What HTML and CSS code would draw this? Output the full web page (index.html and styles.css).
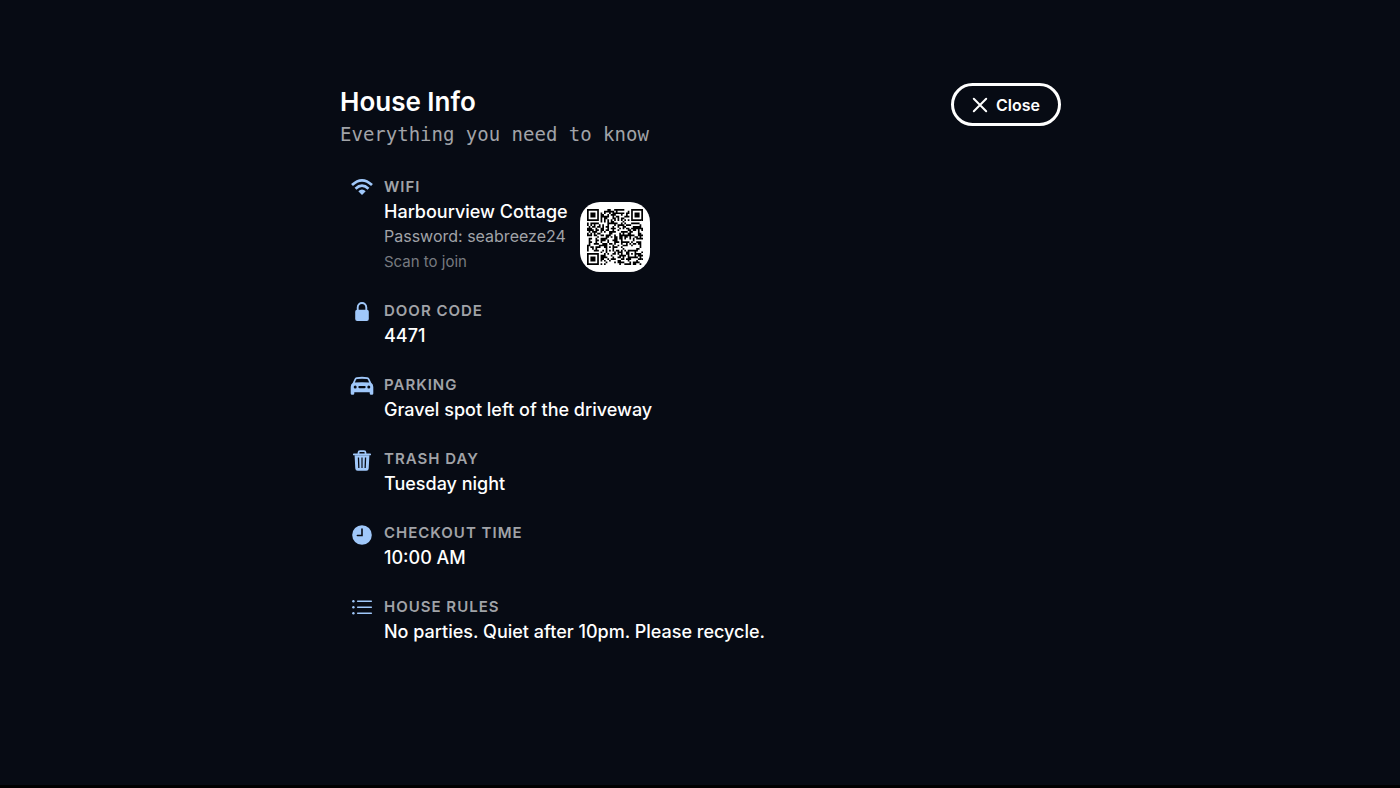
FILE: index.html
```html
<!DOCTYPE html>
<html lang="en">
<head>
<meta charset="utf-8">
<meta name="viewport" content="width=device-width, initial-scale=1">
<title>House Info</title>
<link rel="stylesheet" href="styles.css">
</head>
<body>
<main class="panel">
  <header class="panel-header">
    <div class="heading">
      <h1 class="title">House Info</h1>
      <p class="subtitle">Everything you need to know</p>
    </div>
    <button class="close" type="button">
      <svg class="close-icon" viewBox="0 0 16 16" aria-hidden="true"><path d="M1.8 1.8 14.2 14.2M14.2 1.8 1.8 14.2"/></svg>
      Close
    </button>
  </header>
  <div class="rows">
    <section class="row">
      <svg class="icon" viewBox="0 0 24 24" aria-hidden="true">
        <g fill="none" stroke="currentColor" stroke-width="2.7"><path d="M2 10.1Q12 .6 22 10.1"/><path d="M5.5 13.7Q12 7.6 18.5 13.7"/></g>
        <path d="M8.3 16.2Q12 12.8 15.7 16.2L12 20Z"/>
      </svg>
      <div class="text">
        <h2 class="label">WIFI</h2>
        <div class="wifi">
          <div>
            <p class="value">Harbourview Cottage</p>
            <p class="password">Password: seabreeze24</p>
            <p class="hint">Scan to join</p>
          </div>
          <div class="qr-card"><svg class="qr" role="img" aria-label="Wi-Fi QR code" viewBox="0 0 33 33"><path id="qr-modules" shape-rendering="geometricPrecision"/></svg></div>
        </div>
      </div>
    </section>
    <section class="row">
      <svg class="icon" viewBox="0 0 24 24" aria-hidden="true">
        <path d="M7.7 11V8.6C7.7 2.4 16.3 2.4 16.3 8.6V11" fill="none" stroke="currentColor" stroke-width="1.9"/>
        <rect x="5.2" y="10.7" width="13.6" height="11.3" rx="2"/>
      </svg>
      <div class="text">
        <h2 class="label">DOOR CODE</h2>
        <p class="value">4471</p>
      </div>
    </section>
    <section class="row">
      <svg class="icon" viewBox="0 0 24 24" aria-hidden="true">
        <path fill-rule="evenodd" d="M6.6 4.2Q12 3.2 17.4 4.2Q18.9 4.5 19.5 5.9L21.2 9.7Q23.3 11.3 23.3 14V20.5Q23.3 21.8 22 21.8H21Q19.7 21.8 19.7 20.5V19.3H4.3V20.5Q4.3 21.8 3 21.8H2Q.7 21.8 .7 20.5V14Q.7 11.3 2.8 9.7L4.5 5.9Q5.1 4.5 6.6 4.2ZM7 6Q6.3 6.1 6 6.8L4.8 9.6Q12 8.8 19.2 9.6L18 6.8Q17.7 6.1 17 6Q12 5.3 7 6ZM5.2 12.5A1.5 1.5 0 1 0 5.2 15.5A1.5 1.5 0 1 0 5.2 12.5ZM18.8 12.5A1.5 1.5 0 1 0 18.8 15.5A1.5 1.5 0 1 0 18.8 12.5ZM9.4 13A1.1 1.1 0 0 0 9.4 15.2H14.6A1.1 1.1 0 0 0 14.6 13Z"/>
      </svg>
      <div class="text">
        <h2 class="label">PARKING</h2>
        <p class="value">Gravel spot left of the driveway</p>
      </div>
    </section>
    <section class="row">
      <svg class="icon" viewBox="0 0 24 24" aria-hidden="true">
        <path d="M8.5 7V5.6Q8.5 4.1 10 4.1H14Q15.5 4.1 15.5 5.6V7M3.8 7.4H20.2" fill="none" stroke="currentColor" stroke-width="1.7" stroke-linecap="round"/>
        <path fill-rule="evenodd" d="M4.6 8.3H19.4L18.7 21.6Q18.6 23.8 16.4 23.8H7.6Q5.4 23.8 5.3 21.6ZM7.8 10.6 8.2 21.1H9.5L9.1 10.6ZM11.4 10.6V21.1H12.6V10.6ZM14.9 10.6 14.5 21.1H15.8L16.2 10.6Z"/>
      </svg>
      <div class="text">
        <h2 class="label">TRASH DAY</h2>
        <p class="value">Tuesday night</p>
      </div>
    </section>
    <section class="row">
      <svg class="icon" viewBox="0 0 24 24" aria-hidden="true">
        <circle cx="12" cy="14" r="9.8"/>
        <path class="clock-hands" d="M12 8V14.5H7.4"/>
      </svg>
      <div class="text">
        <h2 class="label">CHECKOUT TIME</h2>
        <p class="value">10:00 AM</p>
      </div>
    </section>
    <section class="row">
      <svg class="icon" viewBox="0 0 24 24" aria-hidden="true">
        <path d="M7.7 6.3H21.3M7.7 12.3H21.3M7.7 18.3H21.3" fill="none" stroke="currentColor" stroke-width="1.6" stroke-linecap="round"/>
        <circle cx="3.4" cy="6.3" r="1.2"/><circle cx="3.4" cy="12.3" r="1.2"/><circle cx="3.4" cy="18.3" r="1.2"/>
      </svg>
      <div class="text">
        <h2 class="label">HOUSE RULES</h2>
        <p class="value">No parties. Quiet after 10pm. Please recycle.</p>
      </div>
    </section>
  </div>
</main>
<script src="qr.js"></script>
</body>
</html>
```
FILE: styles.css
```css
* { box-sizing: border-box; }

body {
  margin: 0;
  min-height: 100vh;
  padding: 83px 24px 40px;
  background: #070b14;
  border-bottom: 3px solid #000;
  color: #fff;
  font-family: Inter, "Liberation Sans", sans-serif;
}

h1, h2, p { margin: 0; }

.panel {
  max-width: 722px;
  margin: 0 auto;
  padding-left: 1px;
}

.panel-header {
  display: flex;
  justify-content: space-between;
  align-items: flex-start;
  margin-bottom: 28px;
}

.title {
  font-size: 26px;
  line-height: 38px;
  font-weight: 600;
}

.subtitle {
  font-family: "DejaVu Sans Mono", "Liberation Mono", monospace;
  font-size: 19px;
  line-height: 26px;
  color: #a1a3a8;
}

.close {
  display: flex;
  align-items: center;
  gap: 8px;
  height: 43px;
  padding: 0 18px;
  border: 3px solid #fff;
  border-radius: 22px;
  background: transparent;
  color: #fff;
  font: 600 16px/24px Inter, "Liberation Sans", sans-serif;
}

.close-icon {
  width: 16px;
  height: 16px;
  fill: none;
  stroke: currentColor;
  stroke-width: 2;
  stroke-linecap: round;
}

.rows {
  display: flex;
  flex-direction: column;
  gap: 25px;
  padding-left: 10px;
}

.row {
  display: flex;
  gap: 10px;
}

.icon {
  flex: none;
  width: 24px;
  height: 24px;
  fill: currentColor;
  color: #a0c8fa;
}

.clock-hands {
  fill: none;
  stroke: #070b14;
  stroke-width: 1.6;
  stroke-linecap: round;
}

.wifi {
  display: flex;
  align-items: center;
  gap: 12px;
}

.label {
  font-size: 15px;
  line-height: 24px;
  font-weight: 600;
  letter-spacing: 1px;
  color: #a1a3a8;
}

.value {
  font-size: 18px;
  line-height: 25px;
  font-weight: 500;
}

.password {
  font-size: 16px;
  line-height: 25px;
  color: #a1a3a8;
}

.hint {
  font-size: 15px;
  line-height: 25px;
  color: #777a80;
}

.qr-card {
  width: 70px;
  height: 70px;
  padding: 7px;
  border-radius: 20px;
  background: #fff;
}

.qr {
  display: block;
  width: 56px;
  height: 56px;
}
```
FILE: qr.js
```js
// Builds a version 4, level M QR code for the Wi-Fi network.
(function () {
  const N = 33, DATA = 64, ECC = 18;
  const payload = "WIFI:T:WPA;S:Harbourview Cottage;P:seabreeze24;;";

  const exp = [], log = [];
  for (let i = 0, x = 1; i < 255; i++) {
    exp[i] = x; log[x] = i;
    x <<= 1; if (x & 256) x ^= 285;
  }
  const mul = (a, b) => a && b ? exp[(log[a] + log[b]) % 255] : 0;
  let gen = [1];
  for (let i = 0; i < ECC; i++) {
    const next = gen.concat(0);
    gen.forEach((c, j) => { next[j + 1] ^= mul(c, exp[i]); });
    gen = next;
  }
  function remainder(block) {
    const r = block.concat(Array(ECC).fill(0));
    for (let i = 0; i < block.length; i++) {
      const f = r[i];
      gen.forEach((c, j) => { r[i + j] ^= mul(c, f); });
    }
    return r.slice(block.length);
  }

  let bits = "0100" + payload.length.toString(2).padStart(8, "0");
  for (const ch of payload) bits += ch.charCodeAt(0).toString(2).padStart(8, "0");
  bits += "0000";
  while (bits.length % 8) bits += "0";
  const data = bits.match(/.{8}/g).map(b => parseInt(b, 2));
  for (let p = 0; data.length < DATA; p++) data.push(p % 2 ? 17 : 236);

  const blocks = [data.slice(0, 32), data.slice(32)];
  const ecc = blocks.map(remainder);
  const out = [];
  for (let i = 0; i < 32; i++) blocks.forEach(b => out.push(b[i]));
  for (let i = 0; i < ECC; i++) ecc.forEach(b => out.push(b[i]));
  const stream = out.map(b => b.toString(2).padStart(8, "0")).join("");

  const base = Array.from({ length: N }, () => Array(N).fill(0));
  const fixed = Array.from({ length: N }, () => Array(N).fill(false));
  const put = (g, r, c, v) => {
    if (r >= 0 && c >= 0 && r < N && c < N) { g[r][c] = v ? 1 : 0; fixed[r][c] = true; }
  };
  for (let i = 0; i < N; i++) { put(base, 6, i, i % 2 === 0); put(base, i, 6, i % 2 === 0); }
  for (const [r, c] of [[3, 3], [3, N - 4], [N - 4, 3]]) {
    for (let y = -4; y <= 4; y++) for (let x = -4; x <= 4; x++) {
      const d = Math.max(Math.abs(x), Math.abs(y));
      put(base, r + y, c + x, d !== 2 && d !== 4);
    }
  }
  for (let y = -2; y <= 2; y++) for (let x = -2; x <= 2; x++) {
    put(base, 26 + y, 26 + x, Math.max(Math.abs(x), Math.abs(y)) !== 1);
  }
  function format(g, mask) {
    let rem = mask;
    for (let i = 0; i < 10; i++) rem = (rem << 1) ^ ((rem >> 9) * 1335);
    const v = (mask << 10 | rem) ^ 21522, bit = i => v >> i & 1;
    for (let i = 0; i < 6; i++) put(g, i, 8, bit(i));
    put(g, 7, 8, bit(6)); put(g, 8, 8, bit(7)); put(g, 8, 7, bit(8));
    for (let i = 9; i < 15; i++) put(g, 8, 14 - i, bit(i));
    for (let i = 0; i < 8; i++) put(g, 8, N - 1 - i, bit(i));
    for (let i = 8; i < 15; i++) put(g, N - 15 + i, 8, bit(i));
    put(g, N - 8, 8, 1);
  }
  format(base, 0);

  let k = 0;
  for (let right = N - 1; right >= 1; right -= 2) {
    if (right === 6) right = 5;
    for (let v = 0; v < N; v++) for (let j = 0; j < 2; j++) {
      const c = right - j, r = ((right + 1) & 2) === 0 ? N - 1 - v : v;
      if (!fixed[r][c]) base[r][c] = +(stream[k++] || 0);
    }
  }

  const masks = [
    (r, c) => (r + c) % 2, (r, c) => r % 2, (r, c) => c % 3, (r, c) => (r + c) % 3,
    (r, c) => ((r >> 1) + Math.floor(c / 3)) % 2,
    (r, c) => r * c % 2 + r * c % 3,
    (r, c) => (r * c % 2 + r * c % 3) % 2,
    (r, c) => ((r + c) % 2 + r * c % 3) % 2
  ];
  function penalty(g) {
    let score = 0, dark = 0;
    const lines = g.map(r => r.join("")).concat(g.map((_, i) => g.map(r => r[i]).join("")));
    for (const s of lines) {
      for (const m of s.match(/0{5,}|1{5,}/g) || []) score += m.length - 2;
      for (let i = 0; i + 11 <= N; i++) {
        const t = s.substr(i, 11);
        if (t === "10111010000" || t === "00001011101") score += 40;
      }
    }
    for (let r = 0; r < N; r++) for (let c = 0; c < N; c++) {
      dark += g[r][c];
      if (r < N - 1 && c < N - 1 && g[r][c] === g[r + 1][c] && g[r][c] === g[r][c + 1] && g[r][c] === g[r + 1][c + 1]) score += 3;
    }
    return score + Math.floor(Math.abs(dark * 20 / (N * N) - 10)) * 10;
  }
  let best = null, low = Infinity;
  masks.forEach((fn, m) => {
    const g = base.map((row, r) => row.map((v, c) => fixed[r][c] ? v : v ^ (fn(r, c) === 0 ? 1 : 0)));
    format(g, m);
    const p = penalty(g);
    if (p < low) { low = p; best = g; }
  });

  let d = "";
  best.forEach((row, r) => row.forEach((v, c) => { if (v) d += `M${c} ${r}h1v1h-1z`; }));
  document.getElementById("qr-modules").setAttribute("d", d);
})();
```
